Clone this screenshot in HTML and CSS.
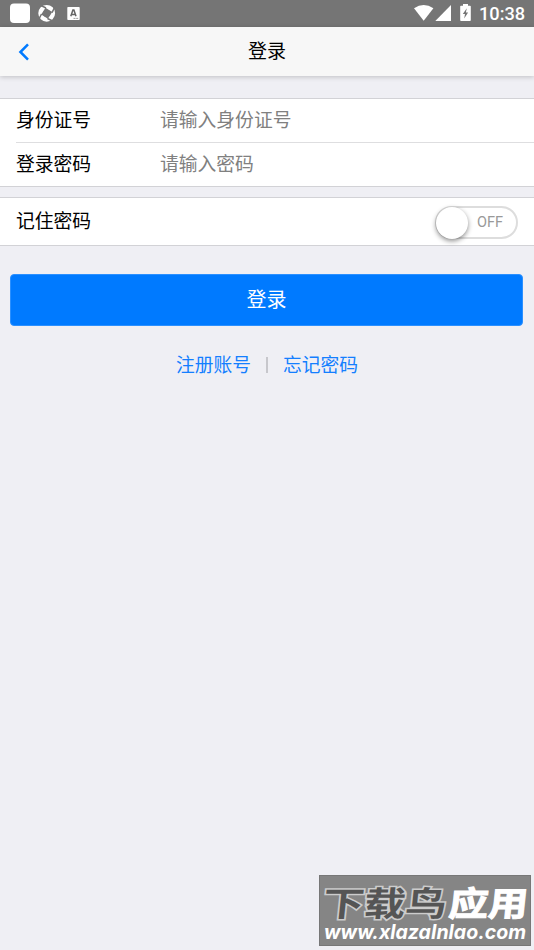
FILE: index.html
```html
<!DOCTYPE html>
<html lang="zh-CN">
<head>
<meta charset="utf-8">
<title>登录</title>
<link rel="stylesheet" href="styles.css">
</head>
<body>
<div class="statusbar">
  <svg class="notices" width="90" height="27" viewBox="0 0 90 27" fill="#fff">
    <rect x="10" y="3.5" width="20" height="19.5" rx="4"/>
    <circle cx="46.7" cy="13.3" r="6" fill="none" stroke="#fff" stroke-width="4.8"/>
    <path d="M41 5.500l5 2.500M54.500 7.600l-2.500 5M52.500 21l-5-2.500M39 19l2.500-5" fill="none" stroke="#757575" stroke-width="1.500"/>
    <path fill="#757575" d="M45.500 7.800l6.700 4.300-4.300 6.700-6.700-4.300z"/>
    <rect x="67.3" y="7" width="12.4" height="13" rx=".8"/>
    <path d="M70.8 16.3l2.1-6.2h1l2.1 6.2M71.6 14.4h3.6" fill="none" stroke="#666" stroke-width="1.5"/>
    <path d="M73.5 18.4h5" stroke="#888" stroke-width=".8" stroke-dasharray="2 .7"/>
  </svg>
  <div class="system">
    <svg width="60" height="27" viewBox="0 0 60 27" fill="#fff">
      <path d="M0 8.3Q9.7 1.7 19.4 8.3L9.7 20.7z"/>
      <path d="M21.3 20.9L37 5v15.9z"/>
      <path d="M47 5.7h2V4h5v1.700h2q.8 0 .8.8V20q0 .9-.8.9h-9q-.8 0-.8-.9V6.500q0-.8.8-.8z"/>
      <path fill="#757575" d="M52.8 8.300l-4 5.600h2.200l-.8 4.600 3.900-6h-2.200z"/>
    </svg>
    <span class="clock">10:38</span>
  </div>
</div>
<header class="navbar">
  <svg class="back" width="12" height="18" viewBox="0 0 12 18"><path d="M10 1.400L2.400 9l7.600 7.600" fill="none" stroke="#007aff" stroke-width="2.500"/></svg>
  <h1 class="title">登录</h1>
</header>
<main>
  <form>
    <div class="group fields">
      <label class="row"><span class="label">身份证号</span><input type="text" placeholder="请输入身份证号"></label>
      <label class="row"><span class="label">登录密码</span><input type="password" placeholder="请输入密码"></label>
    </div>
    <div class="group remember">
      <span class="label">记住密码</span>
      <div class="switch"><span class="knob"></span><span class="state">OFF</span></div>
    </div>
    <button class="submit" type="button">登录</button>
  </form>
  <nav class="links"><a>注册账号</a><span class="divider"></span><a>忘记密码</a></nav>
</main>
<aside class="stamp">
  <svg width="212" height="71" viewBox="0 0 212 71">
    <g class="stamp-name" transform="skewX(-6)">
      <text class="dark" x="7" y="41" textLength="124" lengthAdjust="spacingAndGlyphs">下载鸟</text>
      <text class="light" x="133" y="41" textLength="79" lengthAdjust="spacingAndGlyphs">应用</text>
    </g>
    <text class="stamp-url" x="5" y="64" textLength="202" lengthAdjust="spacingAndGlyphs">www.xlazaInlao.com</text>
  </svg>
</aside>
</body>
</html>
```
FILE: styles.css
```css
* { box-sizing: border-box; }
body {
  margin: 0;
  min-height: 950px;
  background: #efeff4;
  color: #000;
  font: 18.8px/28px "Noto Sans CJK SC", sans-serif;
}
.statusbar {
  display: flex;
  justify-content: space-between;
  height: 27px;
  background: #757575;
}
.notices, .system svg { display: block; }
.system { display: flex; padding-right: 9px; }
.clock {
  width: 46px;
  margin-left: 5px;
  font: 500 18.2px/28px Roboto, sans-serif;
  color: #fff;
  white-space: nowrap;
}
.navbar {
  display: grid;
  grid-template-columns: 48px 1fr 48px;
  align-items: center;
  height: 49px;
  background: #f7f7f7;
  box-shadow: 0 1px 5px rgba(0, 0, 0, .2);
}
.back { margin-left: 18px; }
.title { margin: 0; padding-bottom: 4px; font-size: 19px; font-weight: 400; text-align: center; }
main { padding-top: 22px; }
.group {
  padding-left: 16px;
  background: #fff;
  border: solid #d2d2d6;
  border-width: 1px 0;
}
.row { display: flex; align-items: center; height: 43px; padding-bottom: 3px; }
.row + .row { height: 44px; border-top: 1px solid #dedee0; }
.label { width: 144px; }
input {
  flex: 1;
  min-width: 0;
  height: 30px;
  padding: 0 0 2px;
  border: 0;
  outline: 0;
  background: none;
  font: inherit;
}
input::placeholder { color: #808080; opacity: 1; }
.remember {
  display: flex;
  justify-content: space-between;
  height: 49px;
  margin-top: 10px;
  padding: 8px 16px 0 16px;
}
.switch {
  display: flex;
  align-items: center;
  width: 83px;
  height: 33px;
  border: 2px solid #ddd;
  border-radius: 17px;
}
.knob {
  width: 32px;
  height: 32px;
  margin-left: -1px;
  border-radius: 50%;
  background: #fff;
  box-shadow: 0 2px 5px rgba(0, 0, 0, .45);
}
.state { margin-left: 9px; font: 14.500px/28px Roboto, sans-serif; color: #999; }
.submit {
  display: block;
  width: 513px;
  height: 52px;
  margin: 28px 0 0 10px;
  padding: 0 0 2px;
  border: 1px solid #2b90ff;
  border-radius: 4px;
  background: #007aff;
  color: #fff;
  font: 20px/28px "Noto Sans CJK SC", sans-serif;
}
.links {
  display: flex;
  justify-content: center;
  align-items: center;
  gap: 15px;
  margin-top: 24px;
  color: #147fff;
}
.divider { width: 2px; height: 16px; margin-top: 2px; background: #c7c7cc; }
.stamp {
  position: fixed;
  left: 319px;
  top: 875px;
  width: 212px;
  height: 71px;
  background: #858585;
  box-shadow: inset 0 0 0 1px #777;
}
.stamp svg { display: block; }
.stamp-name { font: 700 34px "Noto Sans CJK SC", sans-serif; }
.dark { fill: #555; stroke: #ccc; stroke-width: 3px; paint-order: stroke; }
.light { fill: #fff; stroke: #fff; stroke-width: 1px; }
.stamp-url { font: italic 700 20px Inter, sans-serif; fill: #fff; }
```
